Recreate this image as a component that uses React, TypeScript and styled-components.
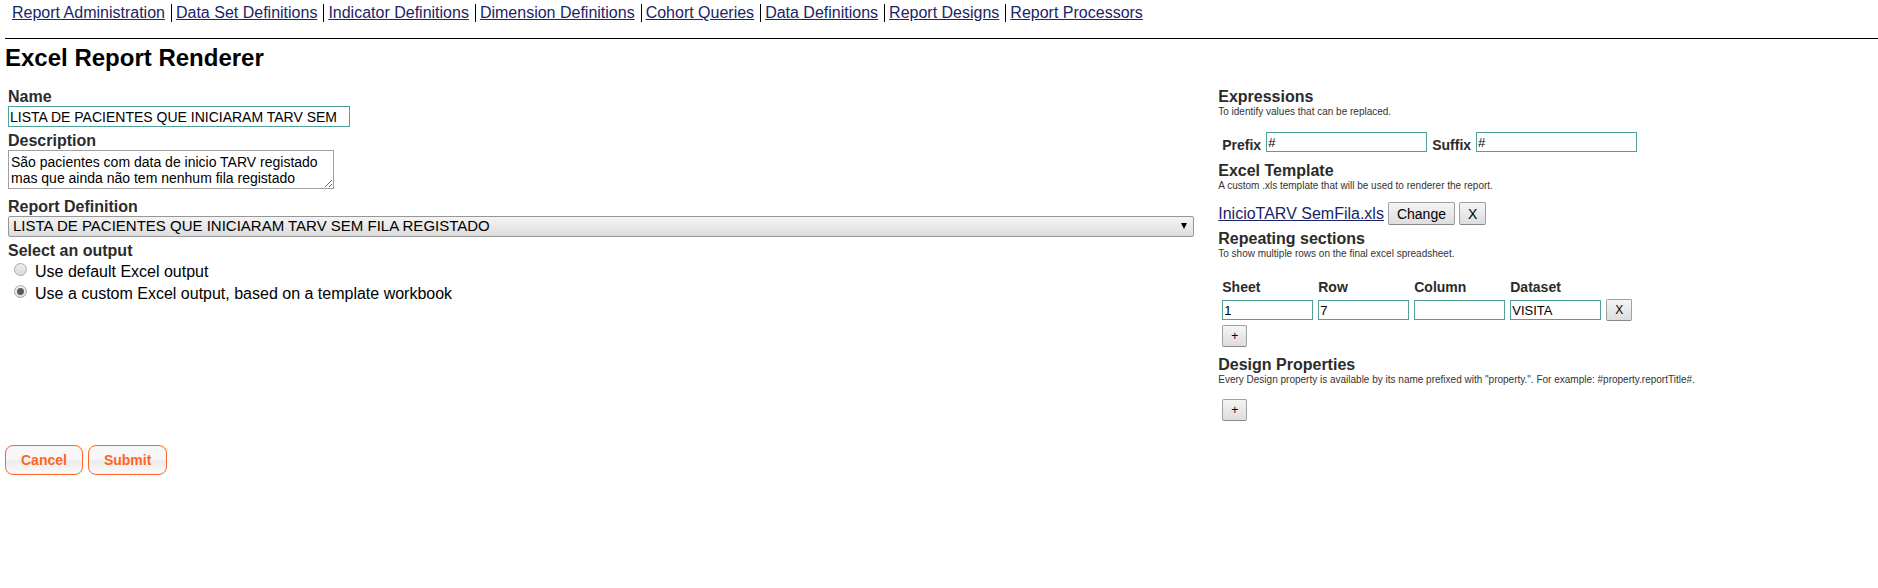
import React from "react";
import styled, { createGlobalStyle } from "styled-components";

const GlobalStyle = createGlobalStyle`
  *, *::before, *::after { box-sizing: border-box; }
  body {
    margin: 0;
    background: #fff;
    color: #000;
    font: 16px/18px "Liberation Sans", Arial, sans-serif;
  }
  input, select, textarea, button { font-family: inherit; color: #000; margin: 0; }
`;

const Page = styled.div`
  padding: 4px 0 24px 5px;
`;

const NavBar = styled.nav`
  padding-bottom: 16px;
  border-bottom: 1px solid #000;
`;

const NavList = styled.ul`
  display: flex;
  flex-wrap: wrap;
  gap: 0 4px;
  margin: 0;
  padding: 0 0 0 7px;
  list-style: none;
`;

const NavItem = styled.li`
  padding-right: 6px;
  border-right: 1px solid #000;
  &:last-child { border-right: 0; }
`;

const Link = styled.a`
  color: #1a2468;
`;

const Title = styled.h1`
  margin: 5px 0 16px;
  font-size: 24px;
  line-height: 28px;
`;

const Columns = styled.div`
  display: grid;
  grid-template-columns: minmax(0, 13fr) minmax(0, 7fr);
  column-gap: 24px;
  padding: 0 21px 0 3px;
`;

const Field = styled.div<{ $gap?: number }>`
  display: flex;
  flex-direction: column;
  align-items: flex-start;
  margin-bottom: ${(p) => p.$gap ?? 5}px;
`;

const FieldLabel = styled.label`
  color: #2b2b2b;
  font-weight: bold;
`;

const TextInput = styled.input<{ $width: number; $large?: boolean }>`
  width: ${(p) => p.$width}px;
  height: ${(p) => (p.$large ? 21 : 20)}px;
  padding: 1px;
  border: 1px solid #4f9f9b;
  background: #fff;
  font-size: ${(p) => (p.$large ? 14 : 13)}px;
`;

const TextArea = styled.textarea`
  width: 326px;
  height: 39px;
  padding: 3px 2px;
  border: 1px solid #a0a0a0;
  font-size: 14px;
  line-height: 16px;
  overflow: hidden;
  resize: both;
`;

const SelectBox = styled.div`
  position: relative;
  width: 100%;
  &::after {
    content: "";
    position: absolute;
    top: 7px;
    right: 7px;
    border: 3px solid transparent;
    border-top: 6px solid #000;
    border-bottom: 0;
    pointer-events: none;
  }
`;

const Select = styled.select`
  display: block;
  appearance: none;
  width: 100%;
  height: 21px;
  padding: 0 20px 2px 4px;
  border: 1px solid #979797;
  border-radius: 2px;
  background: linear-gradient(#f4f4f4, #dddddd);
  font-size: 15px;
`;

const RadioGroup = styled.fieldset`
  margin: 0;
  padding: 0;
  border: 0;
`;

const Legend = styled.legend`
  margin-bottom: 1px;
  padding: 0;
  color: #2b2b2b;
  font-weight: bold;
`;

const RadioLabel = styled.label`
  display: flex;
  gap: 8px;
  padding-left: 6px;
  line-height: 22px;
`;

const Radio = styled.input`
  && { margin: 2px 0 0; }
  appearance: none;
  width: 13px;
  height: 13px;
  border: 1px solid #a9a9a9;
  border-radius: 50%;
  background: linear-gradient(#ececec, #dcdcdc);
  &:checked {
    background: radial-gradient(circle, #5a5a5a 0 3px, transparent 4px), linear-gradient(#f0f0f0, #dcdcdc);
  }
`;

const SectionTitle = styled.h2`
  margin: 0;
  color: #2b2b2b;
  font-size: 16px;
  line-height: 18px;
`;

const Hint = styled.p`
  margin: 0;
  color: #333;
  font-size: 10px;
  line-height: 12px;
`;

const ExpressionRow = styled.div`
  display: flex;
  gap: 5px;
  margin: 14px 0 10px;
  padding-left: 4px;
`;

const SmallLabel = styled.label`
  align-self: flex-end;
  color: #2b2b2b;
  font-size: 14px;
  font-weight: bold;
  line-height: 14px;
`;

const FileRow = styled.div`
  display: flex;
  align-items: baseline;
  gap: 4px;
  margin: 10px 0 5px;
`;

const Button = styled.button<{ $large?: boolean }>`
  height: ${(p) => (p.$large ? 23 : 22)}px;
  padding: 0 8px;
  border: 1px solid #a0a0a0;
  border-bottom-color: #888;
  border-radius: 2px;
  background: linear-gradient(#f5f5f5, #dddddd);
  font-size: ${(p) => (p.$large ? 14 : 12)}px;
`;

const SectionTable = styled.table`
  margin: 18px 0 4px 4px;
  border-collapse: collapse;
  line-height: 18px;
`;

const HeadCell = styled.th`
  padding: 0 0 3px;
  color: #2b2b2b;
  font-size: 14px;
  text-align: left;
`;

const Cell = styled.td`
  height: 22px;
  padding: 0 5px 0 0;
  vertical-align: middle;
  & > * { display: block; }
`;

const AddRow = styled.div<{ $top?: number; $bottom?: number }>`
  display: flex;
  margin: ${(p) => p.$top ?? 0}px 0 ${(p) => p.$bottom ?? 0}px 4px;
`;

const Actions = styled.div`
  display: flex;
  gap: 5px;
  margin-top: 24px;
`;

const ActionButton = styled.button`
  height: 30px;
  padding: 0 15px;
  border: 1px solid #ff6426;
  border-radius: 8px;
  background: linear-gradient(#f7f7f7 50%, #ececec 50%, #f9f9f9);
  && { color: #ff6426; }
  font-size: 14px;
  font-weight: bold;
`;

const navLinks = [
  "Report Administration",
  "Data Set Definitions",
  "Indicator Definitions",
  "Dimension Definitions",
  "Cohort Queries",
  "Data Definitions",
  "Report Designs",
  "Report Processors",
];

const sectionFields = [
  { name: "Sheet", value: "1" },
  { name: "Row", value: "7" },
  { name: "Column", value: "" },
  { name: "Dataset", value: "VISITA" },
];

export default function App() {
  return (
    <Page>
      <GlobalStyle />
      <NavBar>
        <NavList>
          {navLinks.map((text) => (
            <NavItem key={text}>
              <Link href="#">{text}</Link>
            </NavItem>
          ))}
        </NavList>
      </NavBar>
      <Title>Excel Report Renderer</Title>
      <form onSubmit={(e) => e.preventDefault()}>
        <Columns>
          <div>
            <Field>
              <FieldLabel htmlFor="name">Name</FieldLabel>
              <TextInput id="name" $width={342} $large defaultValue="LISTA DE PACIENTES QUE INICIARAM TARV SEM" />
            </Field>
            <Field $gap={9}>
              <FieldLabel htmlFor="description">Description</FieldLabel>
              <TextArea
                id="description"
                defaultValue={"São pacientes com data de inicio TARV registado mas que ainda não tem nenhum fila registado"}
              />
            </Field>
            <Field>
              <FieldLabel htmlFor="definition">Report Definition</FieldLabel>
              <SelectBox>
                <Select id="definition">
                  <option>LISTA DE PACIENTES QUE INICIARAM TARV SEM FILA REGISTADO</option>
                </Select>
              </SelectBox>
            </Field>
            <RadioGroup>
              <Legend>Select an output</Legend>
              <RadioLabel>
                <Radio type="radio" name="output" />
                Use default Excel output
              </RadioLabel>
              <RadioLabel>
                <Radio type="radio" name="output" defaultChecked />
                Use a custom Excel output, based on a template workbook
              </RadioLabel>
            </RadioGroup>
          </div>
          <div>
            <SectionTitle>Expressions</SectionTitle>
            <Hint>To identify values that can be replaced.</Hint>
            <ExpressionRow>
              <SmallLabel htmlFor="prefix">Prefix</SmallLabel>
              <TextInput id="prefix" $width={161} defaultValue="#" />
              <SmallLabel htmlFor="suffix">Suffix</SmallLabel>
              <TextInput id="suffix" $width={161} defaultValue="#" />
            </ExpressionRow>
            <SectionTitle>Excel Template</SectionTitle>
            <Hint>A custom .xls template that will be used to renderer the report.</Hint>
            <FileRow>
              <Link href="#">InicioTARV SemFila.xls</Link>
              <Button type="button" $large>Change</Button>
              <Button type="button" $large>X</Button>
            </FileRow>
            <SectionTitle>Repeating sections</SectionTitle>
            <Hint>To show multiple rows on the final excel spreadsheet.</Hint>
            <SectionTable>
              <thead>
                <tr>
                  {sectionFields.map((f) => (
                    <HeadCell key={f.name} scope="col">
                      <label htmlFor={f.name}>{f.name}</label>
                    </HeadCell>
                  ))}
                </tr>
              </thead>
              <tbody>
                <tr>
                  {sectionFields.map((f) => (
                    <Cell key={f.name}>
                      <TextInput id={f.name} $width={91} defaultValue={f.value} />
                    </Cell>
                  ))}
                  <Cell>
                    <Button type="button">X</Button>
                  </Cell>
                </tr>
              </tbody>
            </SectionTable>
            <AddRow $bottom={9}>
              <Button type="button">+</Button>
            </AddRow>
            <SectionTitle>Design Properties</SectionTitle>
            <Hint>
              Every Design property is available by its name prefixed with "property.". For example: #property.reportTitle#.
            </Hint>
            <AddRow $top={13}>
              <Button type="button">+</Button>
            </AddRow>
          </div>
        </Columns>
        <Actions>
          <ActionButton type="button">Cancel</ActionButton>
          <ActionButton type="submit">Submit</ActionButton>
        </Actions>
      </form>
    </Page>
  );
}
